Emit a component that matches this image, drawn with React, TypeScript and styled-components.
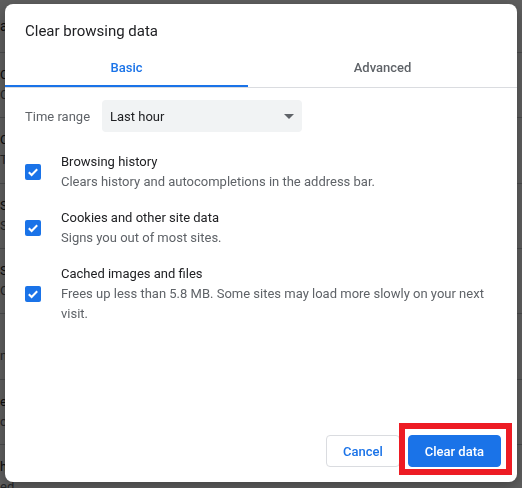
import React, { useState } from 'react';
import styled, { createGlobalStyle } from 'styled-components';

const BLUE = '#1a73e8';
const GREY_TEXT = '#5f6368';

const GlobalStyle = createGlobalStyle`
  html, body {
    margin: 0;
    padding: 0;
  }
  body {
    font-family: Roboto, 'Liberation Sans', Arial, sans-serif;
    font-size: 13px;
    color: #202124;
  }
  * {
    box-sizing: border-box;
  }
`;

// --- settings page behind the dialog (only a sliver shows at the edges) ---
const Page = styled.div`
  width: 522px;
  height: 488px;
  overflow: hidden;
  background: #fff;
  display: flex;
  flex-direction: column;
`;

const PageHeader = styled.div`
  height: 52px;
  flex-shrink: 0;
  display: flex;
  align-items: center;
  font-size: 14px;
`;

const SettingRow = styled.div`
  height: 65.33px;
  flex-shrink: 0;
  display: flex;
  flex-direction: column;
  justify-content: center;
  border-top: 1px solid #c8cacd;
  line-height: 20px;
  white-space: nowrap;
`;

const SettingTitle = styled.div`
  min-height: 20px;
  color: #202124;
`;

const SettingSub = styled.div`
  color: ${GREY_TEXT};
`;

// --- dialog ---
const Backdrop = styled.div`
  position: fixed;
  inset: 0;
  background: rgba(0, 0, 0, 0.63);
  display: flex;
  align-items: flex-start;
  padding: 4px 5px 0;
`;

const Dialog = styled.div`
  width: 512px;
  height: 478px;
  background: #fff;
  border-radius: 8px;
  display: flex;
  flex-direction: column;
  box-shadow: 0 4px 14px rgba(0, 0, 0, 0.3);
`;

const Title = styled.h1`
  margin: 0;
  padding: 17px 20px 6px;
  font-size: 15px;
  line-height: 20px;
  font-weight: 400;
  color: #202124;
`;

const TabBar = styled.div`
  display: grid;
  grid-template-columns: 243px 1fr;
  border-bottom: 1px solid #dadce0;
`;

const Tab = styled.button<{ $active?: boolean }>`
  height: 40px;
  border: 0;
  padding: 0;
  background: transparent;
  font: inherit;
  font-size: 13px;
  font-weight: 500;
  color: ${(p) => (p.$active ? BLUE : GREY_TEXT)};
  box-shadow: ${(p) => (p.$active ? `inset 0 -2px 0 ${BLUE}` : 'none')};
  cursor: pointer;
`;

const Body = styled.div`
  padding: 12px 20px 0;
  display: flex;
  flex-direction: column;
`;

const RangeRow = styled.div`
  display: flex;
  align-items: center;
`;

const RangeLabel = styled.span`
  width: 77px;
  color: ${GREY_TEXT};
`;

const Select = styled.div`
  width: 200px;
  height: 32px;
  border-radius: 4px;
  background: #f1f3f4;
  display: flex;
  align-items: center;
  justify-content: space-between;
  padding: 0 8px 0 8px;
  color: #202124;
`;

const OptionList = styled.div`
  margin-top: 12px;
  display: flex;
  flex-direction: column;
`;

const Option = styled.label`
  display: flex;
  align-items: center;
  gap: 20px;
  padding: 8px 0;
  line-height: 20px;
  cursor: pointer;
`;

const Box = styled.span<{ $checked: boolean }>`
  width: 16px;
  height: 16px;
  flex-shrink: 0;
  border-radius: 2px;
  background: ${(p) => (p.$checked ? BLUE : '#fff')};
  border: ${(p) => (p.$checked ? 'none' : `2px solid ${GREY_TEXT}`)};
  display: flex;
  align-items: center;
  justify-content: center;
`;

const OptionText = styled.div`
  display: flex;
  flex-direction: column;
`;

const OptionLabel = styled.span`
  color: #202124;
`;

const OptionHint = styled.span`
  color: ${GREY_TEXT};
`;

const Footer = styled.div`
  margin-top: auto;
  padding: 0 16px 15px;
  display: flex;
  justify-content: flex-end;
  gap: 8px;
`;

const Button = styled.button<{ $primary?: boolean }>`
  height: 32px;
  padding: 0 16px;
  border-radius: 4px;
  border: 1px solid ${(p) => (p.$primary ? BLUE : '#dadce0')};
  background: ${(p) => (p.$primary ? BLUE : '#fff')};
  color: ${(p) => (p.$primary ? '#fff' : BLUE)};
  font: inherit;
  font-size: 13px;
  font-weight: 500;
  cursor: pointer;
`;

/* red annotation frame drawn round the primary button */
const Highlight = styled.span`
  position: relative;
  display: inline-flex;

  &::after {
    content: '';
    position: absolute;
    left: -9px;
    top: -12px;
    right: -11px;
    bottom: -8px;
    border: 6px solid #ed1c24;
    pointer-events: none;
  }
`;

const BG_ROWS = [
  { title: 'Clear browsing data', sub: 'Clear history, cookies, cache, and more' },
  { title: 'Cookies and other site data', sub: 'Third-party cookies are blocked in Incognito mode' },
  { title: 'Security', sub: 'Safe Browsing (protection from dangerous sites)' },
  { title: 'Site Settings', sub: 'Controls what information sites can use and show' },
  { title: '', sub: 'nstall and manage extensions' },
  { title: 'extensions', sub: 'content settings' },
  { title: 'history', sub: 'ed' },
];

const OPTIONS = [
  { label: 'Browsing history', hint: 'Clears history and autocompletions in the address bar.' },
  { label: 'Cookies and other site data', hint: 'Signs you out of most sites.' },
  {
    label: 'Cached images and files',
    hint: 'Frees up less than 5.8 MB. Some sites may load more slowly on your next visit.',
  },
];

const Check = () => (
  <svg width="12" height="12" viewBox="0 0 12 12" aria-hidden="true">
    <path d="M1.8 6.2 L4.6 9 L10.2 3.2" fill="none" stroke="#fff" strokeWidth="2" />
  </svg>
);

const Caret = () => (
  <svg width="10" height="5" viewBox="0 0 10 5" aria-hidden="true">
    <polygon points="0,0 10,0 5,5" fill={GREY_TEXT} />
  </svg>
);

export default function App() {
  const [tab, setTab] = useState(0);
  const [checked, setChecked] = useState([true, true, true]);

  const toggle = (i: number) => setChecked((c) => c.map((v, j) => (j === i ? !v : v)));

  return (
    <>
      <GlobalStyle />
      <Page aria-hidden="true">
        <PageHeader>arch settings</PageHeader>
        {BG_ROWS.map((r, i) => (
          <SettingRow key={i}>
            <SettingTitle>{r.title}</SettingTitle>
            <SettingSub>{r.sub}</SettingSub>
          </SettingRow>
        ))}
      </Page>
      <Backdrop>
        <Dialog role="dialog" aria-label="Clear browsing data">
          <Title>Clear browsing data</Title>
          <TabBar>
            <Tab $active={tab === 0} onClick={() => setTab(0)}>Basic</Tab>
            <Tab $active={tab === 1} onClick={() => setTab(1)}>Advanced</Tab>
          </TabBar>
          <Body>
            <RangeRow>
              <RangeLabel>Time range</RangeLabel>
              <Select>
                <span>Last hour</span>
                <Caret />
              </Select>
            </RangeRow>
            <OptionList>
              {OPTIONS.map((o, i) => (
                <Option key={o.label} onClick={() => toggle(i)}>
                  <Box $checked={checked[i]}>{checked[i] && <Check />}</Box>
                  <OptionText>
                    <OptionLabel>{o.label}</OptionLabel>
                    <OptionHint>{o.hint}</OptionHint>
                  </OptionText>
                </Option>
              ))}
            </OptionList>
          </Body>
          <Footer>
            <Button>Cancel</Button>
            <Highlight>
              <Button $primary>Clear data</Button>
            </Highlight>
          </Footer>
        </Dialog>
      </Backdrop>
    </>
  );
}
